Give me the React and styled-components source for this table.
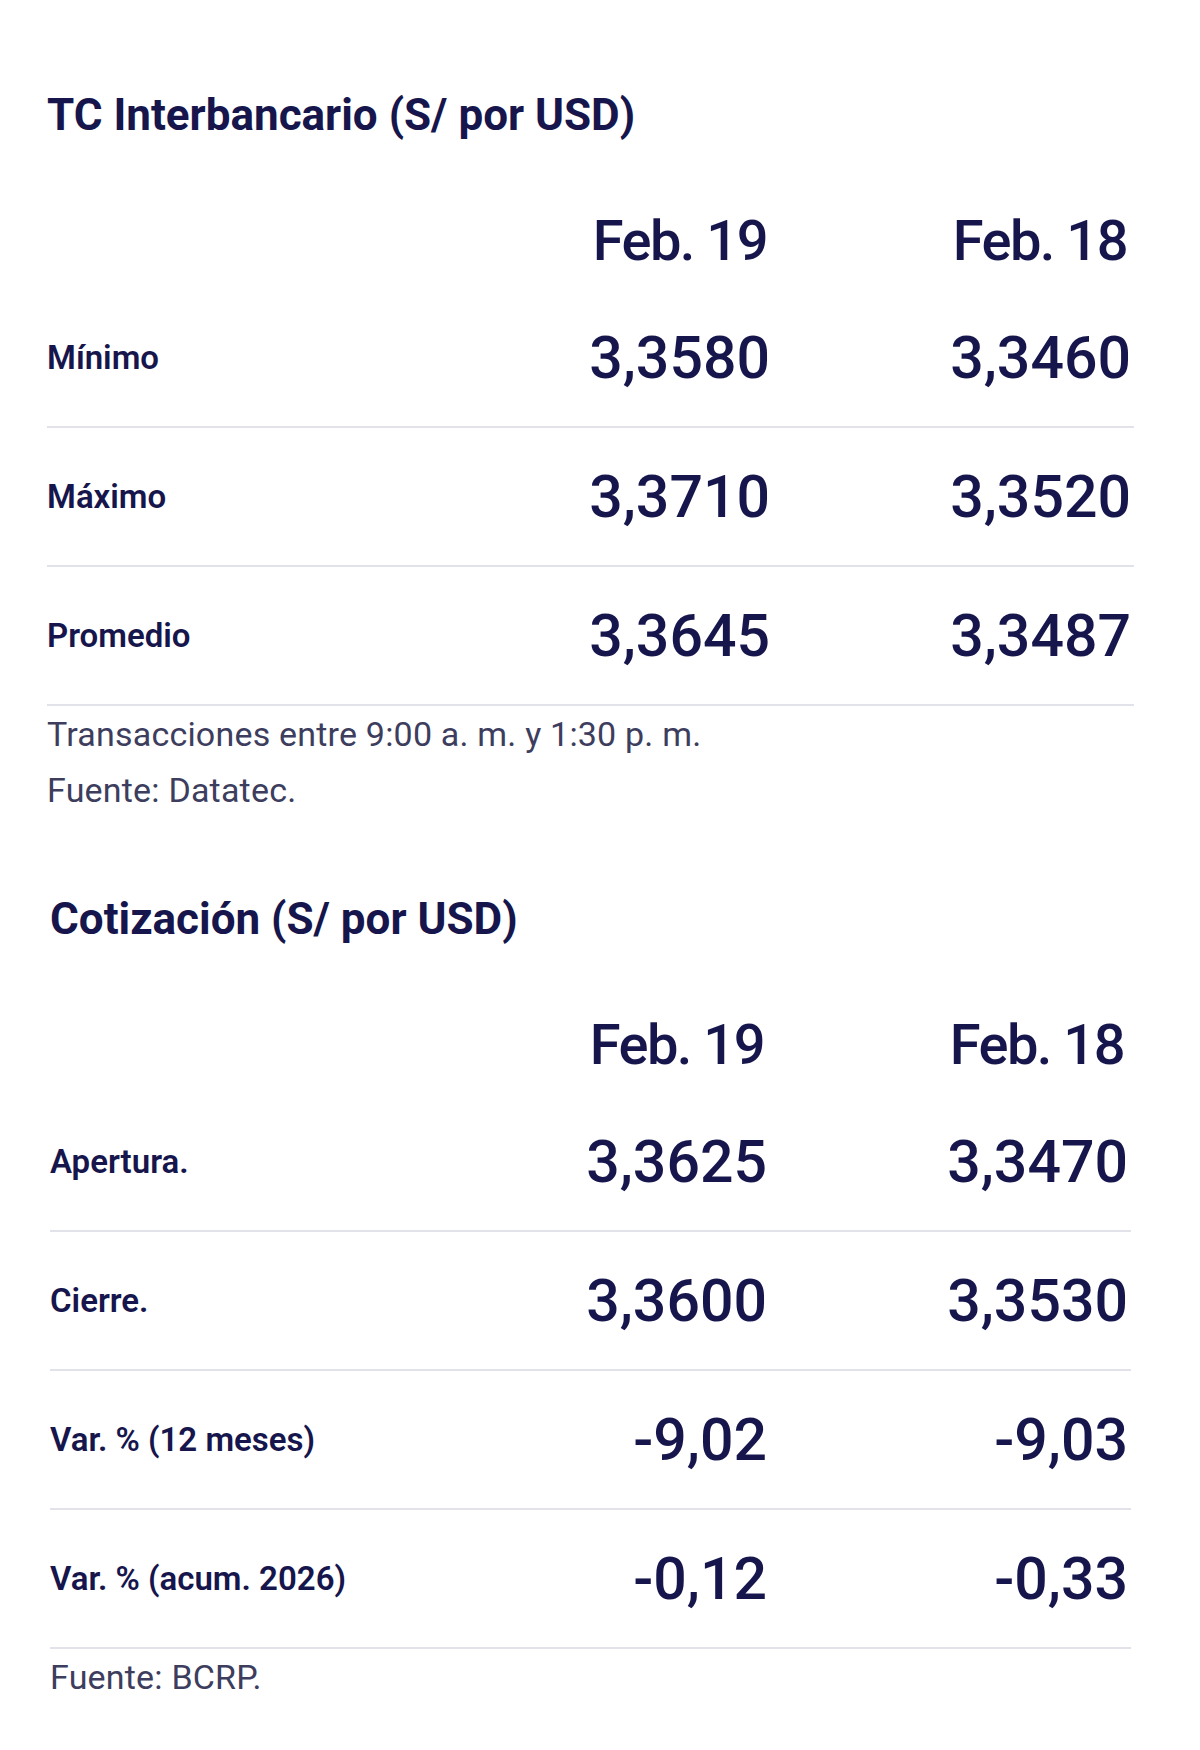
import React from 'react'
import styled, { createGlobalStyle } from 'styled-components'

const GlobalStyle = createGlobalStyle`
  body {
    margin: 0;
    background: #ffffff;
    font-family: Roboto, "Liberation Sans", sans-serif;
    color: #16164d;
  }
`

const Page = styled.main`
  padding: 89px 66px 20px 47px;
`

const Section = styled.section`
  margin-top: ${p => p.$gap || 0}px;
  padding: 0 ${p => p.$inset || 0}px;
`

const Title = styled.h2`
  margin: 0;
  font-size: 44px;
  line-height: 52px;
  font-weight: 700;
`

const Row = styled.div`
  display: grid;
  grid-template-columns: 1fr 240px 364px;
  align-items: center;
  height: 137px;
  border-bottom: 2px solid #e2e2ea;
`

const HeadRow = styled(Row)`
  height: auto;
  border-bottom: none;
  padding: 67px 0 15px;
  font-size: 56px;
  line-height: 66px;
  font-weight: 500;
  letter-spacing: -1.5px;
`

const Label = styled.div`
  font-size: 33px;
  font-weight: 600;
`

const Cell = styled.div`
  text-align: right;
  padding-right: ${p => (p.$last ? 3 : 0)}px;
`

const HeadCell = styled(Cell)`
  padding-right: ${p => (p.$last ? 7 : 3)}px;
`

const Value = styled(Cell)`
  font-size: 59px;
  line-height: 70px;
  font-weight: 500;
`

const Note = styled.p`
  margin: 0;
  font-size: 34px;
  line-height: 56px;
  font-weight: 400;
  letter-spacing: 0.2px;
  color: #3d3d5e;
`

const tables = [
  {
    title: 'TC Interbancario (S/ por USD)',
    rows: [
      ['Mínimo', '3,3580', '3,3460'],
      ['Máximo', '3,3710', '3,3520'],
      ['Promedio', '3,3645', '3,3487'],
    ],
    notes: ['Transacciones entre 9:00 a. m. y 1:30 p. m.', 'Fuente: Datatec.'],
  },
  {
    title: 'Cotización (S/ por USD)',
    rows: [
      ['Apertura.', '3,3625', '3,3470'],
      ['Cierre.', '3,3600', '3,3530'],
      ['Var. % (12 meses)', '-9,02', '-9,03'],
      ['Var. % (acum. 2026)', '-0,12', '-0,33'],
    ],
    notes: ['Fuente: BCRP.'],
  },
]

function RateTable({ title, rows, notes, gap, inset }) {
  return (
    <Section $gap={gap} $inset={inset}>
      <Title>{title}</Title>
      <HeadRow>
        <span />
        <HeadCell>Feb. 19</HeadCell>
        <HeadCell $last>Feb. 18</HeadCell>
      </HeadRow>
      {rows.map(([label, a, b]) => (
        <Row key={label}>
          <Label>{label}</Label>
          <Value>{a}</Value>
          <Value $last>{b}</Value>
        </Row>
      ))}
      {notes.map(n => (
        <Note key={n}>{n}</Note>
      ))}
    </Section>
  )
}

export default function App() {
  return (
    <>
      <GlobalStyle />
      <Page>
        <RateTable {...tables[0]} />
        <RateTable {...tables[1]} gap={75} inset={3} />
      </Page>
    </>
  )
}
